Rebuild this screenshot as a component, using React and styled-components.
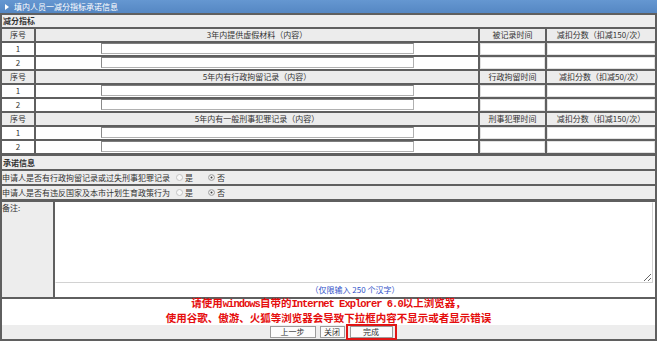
import styled, { createGlobalStyle } from "styled-components";

const GlobalStyle = createGlobalStyle`
  body {
    margin: 0;
    background: #fff;
  }
`;

const LINE = "#5f5f5f";
const PANEL = "#ededed";

const sections = [
  { title: "3年内提供虚假材料（内容）", time: "被记录时间", score: "减扣分数（扣减150/次）" },
  { title: "5年内有行政拘留记录（内容）", time: "行政拘留时间", score: "减扣分数（扣减50/次）" },
  { title: "5年内有一般刑事犯罪记录（内容）", time: "刑事犯罪时间", score: "减扣分数（扣减150/次）" },
];

const pledges = [
  "申请人是否有行政拘留记录或过失刑事犯罪记录",
  "申请人是否有违反国家及本市计划生育政策行为",
];

const App = () => {
  return (
    <Page>
      <GlobalStyle />
      <TitleBar>
        <Arrow />
        填内人员一减分指标承诺信息
      </TitleBar>
      <Sheet>
        <Band>减分指标</Band>
        {sections.map((s, i) => (
          <Group key={i}>
            <Row>
              <Cell $head>序号</Cell>
              <Cell $head>{s.title}</Cell>
              <Cell $head>{s.time}</Cell>
              <Cell $head>{s.score}</Cell>
            </Row>
            {[1, 2].map((n) => (
              <Row key={n}>
                <Cell>{n}</Cell>
                <Cell>
                  <TextInput type="text" />
                </Cell>
                <Cell $field />
                <Cell $field />
              </Row>
            ))}
          </Group>
        ))}
        <Band $h={13} $spaced>承诺信息</Band>
        {pledges.map((p, i) => (
          <Pledge key={i}>
            <span>{p}</span>
            <Option>
              <Radio type="radio" name={`p${i}`} />是
            </Option>
            <Option>
              <Radio type="radio" name={`p${i}`} defaultChecked />否
            </Option>
          </Pledge>
        ))}
        <NoteRow>
          <NoteLabel>备注:</NoteLabel>
          <NoteBody>
            <TextArea />
            <Hint>（仅限输入 250 个汉字）</Hint>
          </NoteBody>
        </NoteRow>
        <Footer>
          <Notice>
            <NoticeLine>
              请使用<Latin>windows</Latin>自带的<Latin>Internet Explorer 6.0</Latin>以上浏览器，
            </NoticeLine>
            <NoticeLine>使用谷歌、傲游、火狐等浏览器会导致下拉框内容不显示或者显示错误</NoticeLine>
          </Notice>
          <ButtonBar>
            <Button $w={46}>上一步</Button>
            <Button $w={25}>关闭</Button>
            <Highlight>
              <Button $w={43}>完成</Button>
            </Highlight>
          </ButtonBar>
        </Footer>
      </Sheet>
    </Page>
  );
};

const Page = styled.div`
  width: 657px;
  font-family: "Noto Sans CJK SC", "Noto Sans", sans-serif;
  font-size: 8px;
  color: #333;
`;

const TitleBar = styled.div`
  height: 13px;
  display: flex;
  align-items: center;
  gap: 5px;
  padding-left: 5px;
  background: linear-gradient(#6597d1, #5587c3);
  color: #fff;
  line-height: 13px;
`;

const Arrow = styled.span`
  width: 0;
  height: 0;
  border-left: 4px solid #fff;
  border-top: 3px solid transparent;
  border-bottom: 3px solid transparent;
`;

const Sheet = styled.div`
  display: flex;
  flex-direction: column;
  gap: 2px;
  padding: 2px;
  background: ${LINE};
`;

const Group = styled.div`
  display: contents;
`;

const Band = styled.div`
  height: ${(p) => p.$h || 12}px;
  margin-top: ${(p) => (p.$spaced ? 1 : 0)}px;
  padding-left: 1px;
  background: ${PANEL};
  font-weight: bold;
  line-height: ${(p) => p.$h || 12}px;
`;

const Row = styled.div`
  display: grid;
  grid-template-columns: 32px 442px 65px 108px;
  gap: 2px;
  height: 12px;
`;

const Cell = styled.div`
  display: flex;
  justify-content: center;
  align-items: flex-start;
  overflow: hidden;
  background: ${(p) => (p.$head ? "#ececec" : "#fff")};
  box-shadow: ${(p) => (p.$field ? "inset 0 0 0 1px #e2e2e2" : "none")};
  line-height: 12px;
  white-space: nowrap;
`;

const TextInput = styled.input`
  width: 313px;
  height: 11px;
  box-sizing: border-box;
  margin: 0;
  padding: 0;
  border: 1px solid #b0b0b0;
  border-top-color: #7d7d7d;
  border-left-color: #8a8a8a;
  background: #fff;
`;

const Pledge = styled.div`
  display: grid;
  grid-template-columns: 174px auto auto;
  justify-content: start;
  align-items: center;
  height: 13px;
  background: ${PANEL};
  line-height: 13px;
  white-space: nowrap;
`;

const Option = styled.label`
  display: flex;
  align-items: center;
  gap: 2px;
  margin-right: 15px;
`;

const Radio = styled.input`
  appearance: none;
  margin: 0;
  width: 7px;
  height: 7px;
  box-sizing: border-box;
  border: 1px solid #c4c4c4;
  border-radius: 50%;
  background: #f8f8f8;
  &:checked {
    background: #3a3a3a;
    box-shadow: inset 0 0 0 1.5px #f6f6f6;
  }
`;

const NoteRow = styled.div`
  display: grid;
  grid-template-columns: 51px 600px;
  gap: 2px;
  height: 95px;
  margin-top: 1px;
`;

const NoteLabel = styled.div`
  background: ${PANEL};
  line-height: 11px;
`;

const NoteBody = styled.div`
  display: flex;
  flex-direction: column;
  background: #fff;
`;

const TextArea = styled.textarea`
  width: 598px;
  height: 81px;
  box-sizing: border-box;
  margin: 0;
  padding: 0;
  border: 1px solid #d2d2d2;
  border-top-color: #fff;
  border-left-color: #fff;
  background: #fff;
  resize: vertical;
`;

const Hint = styled.div`
  height: 14px;
  line-height: 14px;
  text-align: center;
  color: #3152c9;
`;

const Footer = styled.div`
  display: flex;
  flex-direction: column;
  background: #fff;
`;

const Notice = styled.div`
  margin-top: -4px;
  color: #e50d0d;
  font-weight: bold;
  font-size: 10.5px;
  text-align: center;
  white-space: nowrap;
`;

const NoticeLine = styled.div`
  height: 15px;
  line-height: 15px;
`;

const Latin = styled.span`
  font-family: "Liberation Mono", monospace;
  letter-spacing: -1px;
  line-height: 0;
`;

const ButtonBar = styled.div`
  height: 14px;
  display: flex;
  justify-content: center;
  align-items: center;
  gap: 4px;
  padding-left: 9px;
  background: ${PANEL};
`;

const Button = styled.button`
  width: ${(p) => p.$w}px;
  height: 12px;
  margin: 0;
  padding: 0;
  border: 1px solid #9c9c9c;
  background: #fcfcfc;
  color: #333;
  font-family: inherit;
  font-size: 8px;
  line-height: 10px;
`;

const Highlight = styled.div`
  display: flex;
  align-items: center;
  height: 16px;
  box-sizing: border-box;
  margin-left: -3px;
  padding: 0 2px;
  border: 2px solid #e01515;
`;

export default App;
